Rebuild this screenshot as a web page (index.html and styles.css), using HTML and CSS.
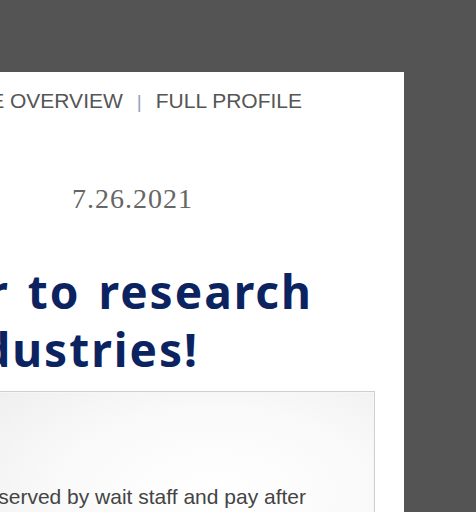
FILE: index.html
```html
<!DOCTYPE html>
<html lang="en">
<head>
<meta charset="utf-8">
<title>Profile</title>
<link rel="stylesheet" href="styles.css">
</head>
<body>
<div class="page">
  <main class="panel">
    <nav class="subnav">
      <a class="subnav-link">COMPANY PROFILE OVERVIEW</a>
      <span class="subnav-sep">|</span>
      <a class="subnav-link">FULL PROFILE</a>
    </nav>
    <p class="date">7.26.2021</p>
    <h1 class="headline">
      <span class="headline-line line-1">Join us and become a partner to research</span>
      <span class="headline-line line-2">and explore new industries!</span>
    </h1>
    <section class="feature">
      <p class="feature-text">Guests are seated and served by wait staff and pay after</p>
    </section>
  </main>
</div>
</body>
</html>
```
FILE: styles.css
```css
html, body {
  margin: 0;
  padding: 0;
}
body {
  background: #545454;
  height: 512px;
  overflow: hidden;
}
.page {
  padding-top: 72px;
}
.panel {
  background: #fff;
  margin-left: -1200px;
  width: 1604px;
  height: 440px;
  padding-top: 17px;
  box-sizing: border-box;
  overflow: hidden;
}
.subnav {
  display: flex;
  justify-content: flex-end;
  align-items: baseline;
  gap: 14px;
  padding-right: 102px;
  font-family: "Liberation Sans", Arial, sans-serif;
  font-size: 21px;
  line-height: 24px;
  color: #555;
}
.subnav-link {
  color: #555;
  text-decoration: none;
}
.subnav-sep {
  color: #8ea2bd;
  font-size: 19px;
}
.date {
  margin: 69px 0 0;
  text-align: right;
  padding-right: 211px;
  font-family: "Liberation Serif", "Times New Roman", serif;
  font-size: 28px;
  line-height: 32px;
  letter-spacing: 1px;
  color: #666;
}
.headline {
  margin: 47px 0 0;
  font-family: "Noto Sans", "DejaVu Sans", sans-serif;
  font-weight: bold;
  font-size: 46px;
  line-height: 58px;
  letter-spacing: 2px;
  word-spacing: 4px;
  color: #0b2461;
  white-space: nowrap;
}
.headline-line {
  display: block;
  text-align: right;
}
.line-1 {
  padding-right: 91px;
}
.line-2 {
  padding-right: 205px;
}
.feature {
  margin: 13px 29px 0 0;
  height: 200px;
  border: 1px solid #cfcfcf;
  box-shadow: inset 0 0 0 1px #f6f6f6;
  background: radial-gradient(ellipse 360px 190px at calc(100% - 160px) 100px, #ffffff 0%, #f9f9f9 45%, #e9e9e9 100%);
  padding-top: 92px;
  box-sizing: border-box;
}
.feature-text {
  margin: 0;
  text-align: right;
  padding-right: 68px;
  font-family: "Liberation Sans", Arial, sans-serif;
  font-size: 21px;
  line-height: 26px;
  color: #444;
  white-space: nowrap;
}
```
